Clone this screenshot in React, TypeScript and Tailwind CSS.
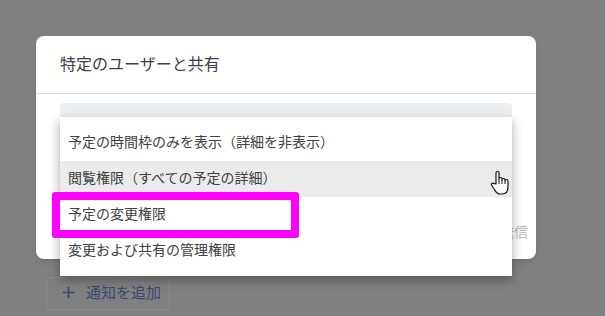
import { Plus } from "lucide-react";

const options = [
  "予定の時間枠のみを表示（詳細を非表示）",
  "閲覧権限（すべての予定の詳細）",
  "予定の変更権限",
  "変更および共有の管理権限",
];

const HandCursor = () => (
  <svg width="20" height="26" viewBox="-1 0 20 26" className="absolute left-[489px] top-[170px]">
    <path
      d="M6 14 V3 a1.5 1.5 0 0 1 3 0 V9 a1.5 1.5 0 0 1 3 0 V10 a1.5 1.5 0 0 1 3 0 V11 a1.5 1.5 0 0 1 3 0 V17 c0 4 -2 7 -6 7 h-2 c-3 0 -4 -2 -6 -5 l-2.5 -4 a1.3 1.3 0 0 1 2 -1.6 L6 14 z"
      fill="#fff"
      stroke="#111"
      strokeWidth="1.2"
      strokeLinejoin="round"
    />
    <path d="M9 9 V14 M12 10 V14 M15 11 V14" stroke="#111" strokeWidth="1" fill="none" />
  </svg>
);

export default function App() {
  return (
    <div
      className="relative w-[605px] h-[316px] overflow-hidden bg-[#808080]"
      style={{ fontFamily: '"Noto Sans CJK JP", "Noto Sans", sans-serif' }}
    >
      <div className="pt-[36px] pl-[36px]">
        <div className="w-[500px] h-[223px] bg-white rounded-[8px] shadow-md flex flex-col">
          <div className="h-[58px] px-6 pb-[3px] flex items-center border-b border-[#dadce0] text-[16px] text-[#3c4043]">
            特定のユーザーと共有
          </div>
          <div className="px-6 pt-[9px]">
            <div className="w-[452px] h-[40px] bg-[#eceff1] rounded-t-[4px]" />
          </div>
          <div className="mt-auto pb-[17px] pr-[8px] flex justify-end text-[14px] text-[#b8b8b8]">
            送信
          </div>
        </div>
      </div>

      <div className="ml-[46px] mt-[18px] w-[124px] h-[33px] border border-[#8b8b8b] rounded-[4px] flex items-center gap-[9px] pl-[13px] pb-[2px] text-[15px] text-[#3b4772]">
        <Plus size={17} strokeWidth={2.4} />
        <span>通知を追加</span>
      </div>

      <div className="absolute left-[60px] top-[117px] w-[452px] bg-white pt-2 pb-[7px] shadow-[0_4px_10px_rgba(0,0,0,0.35)]">
        {options.map((label, i) => (
          <div
            key={label}
            className={`h-[36px] px-2 pb-[3px] flex items-center text-[14px] text-[#3c4043] ${i === 1 ? "bg-[#ebebeb]" : ""}`}
          >
            {label}
          </div>
        ))}
      </div>

      <div className="absolute left-[52px] top-[192px] w-[247px] h-[46px] border-[8px] border-[#ff00ff] rounded-[3px]" />

      <HandCursor />
    </div>
  );
}
